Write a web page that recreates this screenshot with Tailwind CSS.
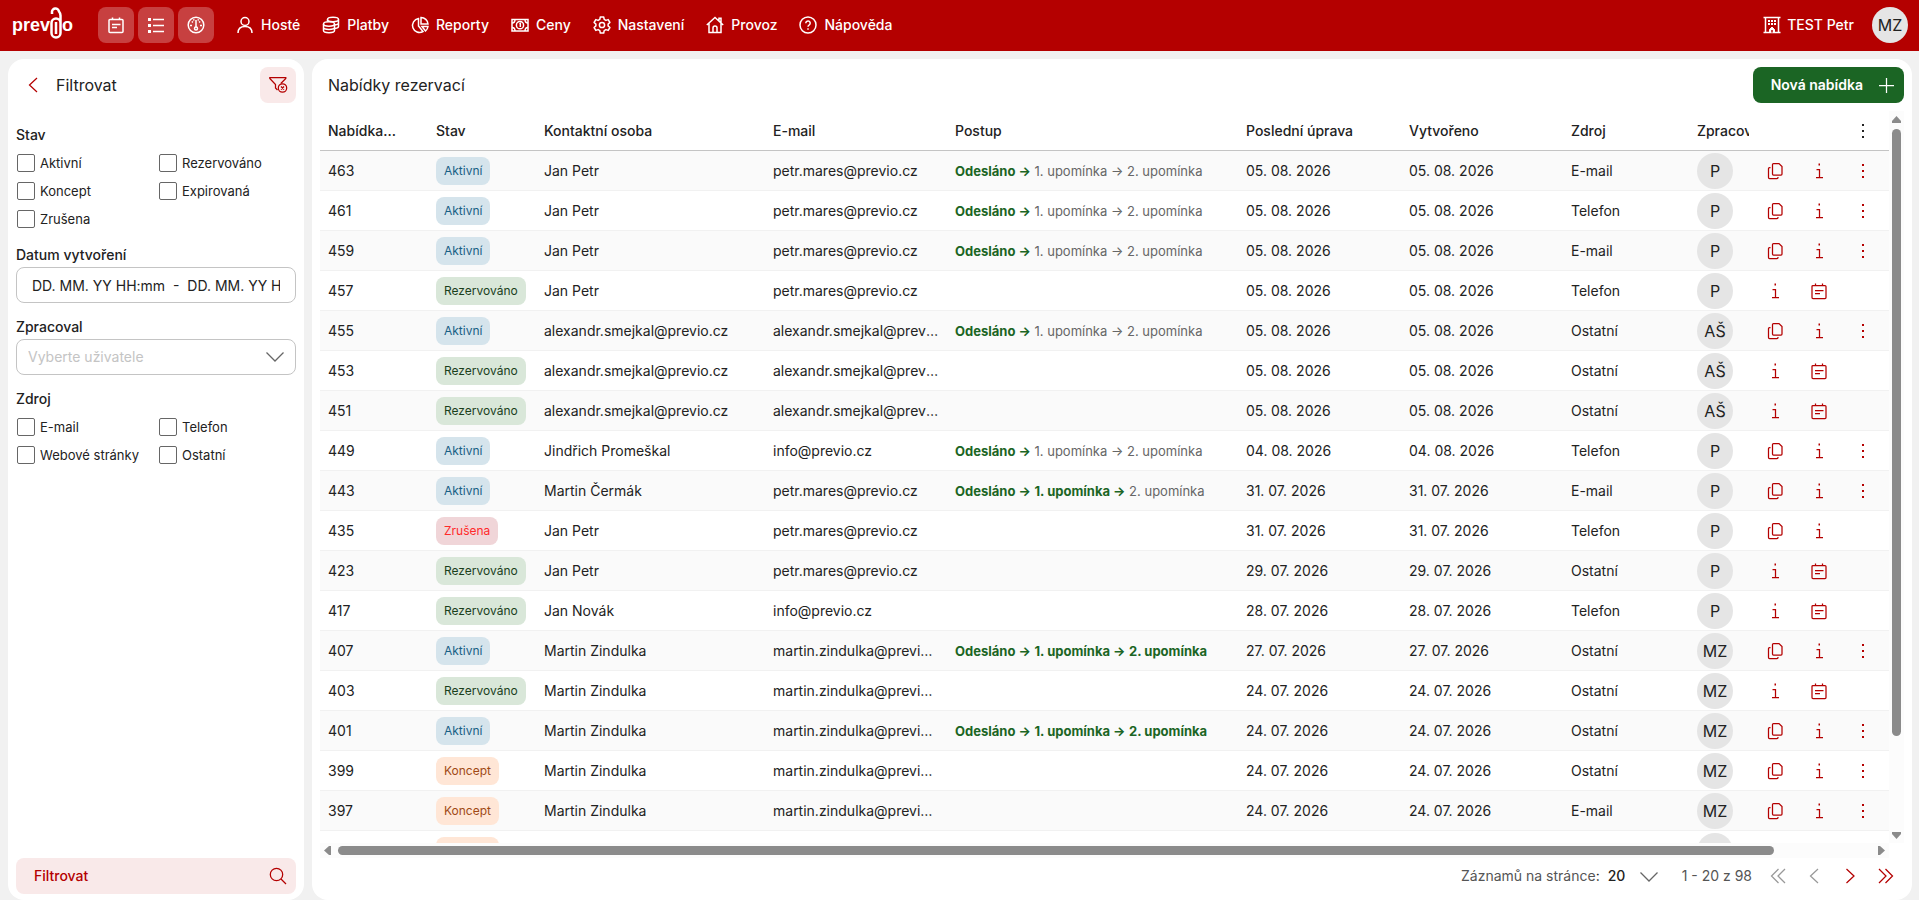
<!DOCTYPE html>
<html lang="cs">
<head>
  <meta charset="UTF-8" />
  <meta name="viewport" content="width=device-width, initial-scale=1" />
  <title>Nabídky rezervací | Previo</title>
  <script src="https://cdn.jsdelivr.net/npm/@tailwindcss/browser@4"></script>
</head>
<body class="flex h-screen flex-col overflow-hidden bg-[#f1f1f1] font-['Inter',sans-serif] text-sm text-[#222]">

  <!-- Ikony -->
  <svg class="hidden">
    <symbol id="i-calendar" viewBox="0 0 18 18"><path d="M3 3.500h12a1 1 0 0 1 1 1v11a1 1 0 0 1-1 1H3a1 1 0 0 1-1-1v-11a1 1 0 0 1 1-1zM5.500 1.500v2M12.500 1.500v2M5 8.500h8.500M5 11.500h5" /></symbol>
    <symbol id="i-list" viewBox="0 0 18 18"><path d="M6 3.500h11M6 9.500h11M6 15.500h11" /><path d="M1 3.500h3M1 9.500h3M1 15.500h3" stroke-width="3" /></symbol>
    <symbol id="i-gauge" viewBox="0 0 18 18"><circle cx="9" cy="9" r="7.800" /><path d="M9 4v7M3 9.500h2M13 9.500h2M4.800 5.500l1.200.8M13.200 5.500l-1.200.8M6.500 3.300l.5 1.200M11.500 3.300L11 4.500" /><circle cx="9" cy="12.500" r="1.500" /></symbol>
    <symbol id="i-user" viewBox="0 0 18 18"><circle cx="9" cy="5.500" r="4" /><path d="M2 17c0-4 2.500-6.500 7-6.500s7 2.500 7 6.500" /></symbol>
    <symbol id="i-coins" viewBox="0 0 18 18"><ellipse cx="7" cy="8" rx="5.500" ry="2.200" /><path d="M1.500 8v6.500c0 1.200 2.500 2.200 5.500 2.200s5.500-1 5.500-2.200V8M1.500 11.200c0 1.200 2.500 2.200 5.500 2.200s5.500-1 5.500-2.200M5.500 5.500V3.500M16.500 3.500v7c0 .9-1.500 1.600-3.500 1.900M16.500 7c0 .9-1.500 1.600-3.500 1.900" /><ellipse cx="11" cy="3.500" rx="5.500" ry="2.200" /></symbol>
    <symbol id="i-pie" viewBox="0 0 18 18"><path d="M7.500 2.500a7 7 0 1 0 4.500 13L7.500 10z" /><path d="M10 1.500v6.500h7A7 7 0 0 0 10 1.500zM11 10.500l3.500 4.500a7 7 0 0 0 2.500-4.500z" /></symbol>
    <symbol id="i-money" viewBox="0 0 18 18"><rect x="1" y="3.500" width="16" height="11.500" /><circle cx="9" cy="9.200" r="3.600" /><path d="M8.500 8l.8-.5v3.500M1 7c2 0 3-1.500 3-3.500M17 7c-2 0-3-1.500-3-3.500M1 11.500c2 0 3 1.500 3 3.500M17 11.500c-2 0-3 1.500-3 3.500" /></symbol>
    <symbol id="i-gear" viewBox="0 0 18 18"><circle cx="9" cy="9" r="2.600" /><path d="M7.300 1h3.400l.5 2.400 1.700 1 2.300-.8 1.700 2.900-1.800 1.600v1.800l1.800 1.600-1.700 2.900-2.300-.8-1.700 1-.5 2.400H7.300l-.5-2.400-1.700-1-2.300.8-1.700-2.900 1.800-1.600V8.100L1.100 6.500l1.700-2.900 2.300.8 1.700-1z" stroke-linejoin="round" /></symbol>
    <symbol id="i-home" viewBox="0 0 18 18"><path d="M.8 9L9 1.500 17.200 9M3 7.500v9h12v-9M13 5V2.200h2v4.500M7 16.500v-4.500a2 2 0 0 1 4 0v4.500" /></symbol>
    <symbol id="i-help" viewBox="0 0 18 18"><circle cx="9" cy="9" r="8" /><path d="M6.800 7.200a2.200 2.200 0 1 1 3.500 1.700c-.8.500-1.300.9-1.300 1.900M9 12.300v1.400" /></symbol>
    <symbol id="i-hotel" viewBox="0 0 18 18"><path d="M.5 1.500h17M.5 16.500h17M2.500 1.500v15M15.500 1.500v15" /><path d="M5 5h2M8 5h2M11 5h2M5 8h2M8 8h2M11 8h2" stroke-width="2" /><path d="M6.500 16v-2.500L9 11l2.500 2.500V16z" fill="currentColor" stroke-width="1" /><path d="M9 14v2.500" stroke="#b40000" /></symbol>
    <symbol id="i-filter" viewBox="0 0 20 20"><path d="M9.500 15L7.500 13V9.500L1.800 3.500V2.500h16V3.500l-5 5" /><circle cx="14.500" cy="13" r="4.200" /><path d="M13 11.500l3 3M16 11.500l-3 3" /></symbol>
    <symbol id="i-left" viewBox="0 0 18 18"><path d="M13 2L5.500 9l7.500 7" /></symbol>
    <symbol id="i-right" viewBox="0 0 18 18"><path d="M5.500 2L13 9l-7.500 7" /></symbol>
    <symbol id="i-first" viewBox="0 0 18 18"><path d="M9.500 2L2.500 9l7 7M16 2L9 9l7 7" /></symbol>
    <symbol id="i-last" viewBox="0 0 18 18"><path d="M2 2l7 7-7 7M8.500 2l7 7-7 7" /></symbol>
    <symbol id="i-down" viewBox="0 0 18 18"><path d="M.5 4.500L9 13l8.500-8.500" /></symbol>
    <symbol id="i-plus" viewBox="0 0 18 18"><path d="M1 9.500h15M8.500 2v15" /></symbol>
    <symbol id="i-search" viewBox="0 0 18 18"><circle cx="7.500" cy="7.500" r="6.200" /><path d="M12 12l5 5" /></symbol>
    <symbol id="i-copy" viewBox="0 0 18 18"><path d="M7.500 1.500h5.500l3 3v7.500a1 1 0 0 1-1 1H7.500a1 1 0 0 1-1-1V2.500a1 1 0 0 1 1-1zM4.500 5.500h-1a1 1 0 0 0-1 1v9a1 1 0 0 0 1 1H11a1 1 0 0 0 1-1v-.500" /></symbol>
    <symbol id="i-info" viewBox="0 0 18 18"><path d="M6.500 7.500H9.500V15.500M6 15.500h7" /><path d="M8.500 2.500h1.500" stroke-width="2" /></symbol>
    <symbol id="i-dots" viewBox="0 0 18 18"><path d="M8 3h2M8 9h2M8 15h2" stroke-width="2" /></symbol>
  </svg>

  <header class="flex h-[51px] shrink-0 items-center bg-[#b40000] pr-[11px] pb-px pl-3 font-medium text-white">
    <a href="#" aria-label="Previo" class="flex w-[62px] items-center font-['Liberation_Sans',sans-serif] text-lg leading-none font-bold">
      <span>prev</span>
      <svg class="mb-1 h-8 w-3 shrink-0 fill-none stroke-current stroke-[2.5]" viewBox="0 0 12 32"><path d="M2 7V5.500a3.500 3.500 0 0 1 7-1c.800 1 1.500 2 1.500 4V26a4.500 4.500 0 0 1-9 0V16a4.500 4.500 0 0 1 9 0M6 15v12" /></svg>
      <span>o</span>
    </a>
    <div class="ml-6 flex gap-1">
      <button aria-label="Kalendář" class="flex size-9 items-center justify-center rounded-lg bg-white/25"><svg class="size-[18px] fill-none stroke-current stroke-[1.5]"><use href="#i-calendar" /></svg></button>
      <button aria-label="Seznam" class="flex size-9 items-center justify-center rounded-lg bg-white/25"><svg class="size-[18px] fill-none stroke-current stroke-[1.5]"><use href="#i-list" /></svg></button>
      <button aria-label="Přehled" class="flex size-9 items-center justify-center rounded-lg bg-white/25"><svg class="size-[18px] fill-none stroke-current stroke-[1.5]"><use href="#i-gauge" /></svg></button>
    </div>
    <nav id="nav" class="ml-[22px] flex gap-[22px]"></nav>
    <a href="#" class="ml-auto flex items-center gap-[6px]"><svg class="size-[18px] fill-none stroke-current stroke-[1.5]"><use href="#i-hotel" /></svg>TEST Petr</a>
    <button class="ml-[18px] size-9 rounded-full bg-[#e5e5e5] text-base font-normal text-[#222]">MZ</button>
  </header>

  <main class="flex min-h-0 grow gap-2 pt-2 pr-[7px] pl-2">
    <!-- Filtr -->
    <form class="flex w-[296px] shrink-0 flex-col rounded-2xl bg-white px-2 pt-2 pb-[6px]">
      <div class="flex items-center text-base">
        <button type="button" aria-label="Zpět" class="ml-2 text-[#b40000]"><svg class="size-[18px] fill-none stroke-current stroke-[1.25]"><use href="#i-left" /></svg></button>
        <h2 class="ml-[14px]">Filtrovat</h2>
        <button type="button" aria-label="Zrušit filtr" class="ml-auto flex size-9 items-center justify-center rounded-lg bg-[#f9e9e9] text-[#b40000]"><svg class="size-5 fill-none stroke-current stroke-[1.25]"><use href="#i-filter" /></svg></button>
      </div>

      <fieldset class="mt-[22px]">
        <legend class="font-medium">Stav</legend>
        <div id="stav" class="mt-2 grid grid-cols-2 gap-x-1 gap-y-2 text-[13px]"></div>
      </fieldset>

      <label for="datum" class="mt-4 font-medium">Datum vytvoření</label>
      <input id="datum" value="DD. MM. YY HH:mm  -  DD. MM. YY HH:mm" class="mt-[2px] h-9 rounded-lg border border-[#c4c4c4] px-[15px] whitespace-pre" />

      <label for="zpracoval" class="mt-[14px] font-medium">Zpracoval</label>
      <div class="relative mt-[2px]">
        <select id="zpracoval" class="h-9 w-full appearance-none rounded-lg border border-[#c4c4c4] px-[11px] text-[#c4c4c4]"><option>Vyberte uživatele</option></select>
        <svg class="pointer-events-none absolute top-[9px] right-3 size-[18px] fill-none stroke-[#666] stroke-[1.25]"><use href="#i-down" /></svg>
      </div>

      <fieldset class="mt-[14px]">
        <legend class="font-medium">Zdroj</legend>
        <div id="zdroj" class="mt-2 grid grid-cols-2 gap-x-1 gap-y-2 text-[13px]"></div>
      </fieldset>

      <button type="button" class="mt-auto flex h-9 items-center justify-between rounded-lg bg-[#f9e9e9] pr-[9px] pl-[18px] font-medium text-[#b40000]">Filtrovat<svg class="size-[18px] fill-none stroke-current stroke-[1.25]"><use href="#i-search" /></svg></button>
    </form>

    <!-- Nabídky -->
    <section class="flex min-w-0 grow flex-col rounded-2xl bg-white px-2 pt-2 pb-[6px]">
      <div class="flex h-9 items-center justify-between pl-2">
        <h1 class="text-base">Nabídky rezervací</h1>
        <button class="flex h-9 items-center gap-[15px] rounded-lg bg-[#1b6524] pr-2 pl-[18px] font-semibold text-white">Nová nabídka<svg class="size-[18px] fill-none stroke-current stroke-[1.25]"><use href="#i-plus" /></svg></button>
      </div>

      <div class="mt-2 flex min-h-0 grow">
        <div class="min-w-0 grow overflow-hidden">
          <table class="w-full table-fixed border-separate border-spacing-0 text-left whitespace-nowrap">
            <colgroup>
              <col class="w-[108px]" /><col class="w-[108px]" /><col class="w-[229px]" /><col class="w-[182px]" /><col /><col class="w-[163px]" /><col class="w-[162px]" /><col class="w-[126px]" /><col class="w-[64px]" /><col class="w-[136px]" />
            </colgroup>
            <thead>
              <tr class="h-10 *:border-b *:border-[#c4c4c4]">
                <th class="pl-2 font-medium">Nabídka...</th>
                <th class="pl-2 font-medium">Stav</th>
                <th class="pl-2 font-medium">Kontaktní osoba</th>
                <th class="pl-2 font-medium">E-mail</th>
                <th class="pl-2 font-medium">Postup</th>
                <th class="pl-2 font-medium">Poslední úprava</th>
                <th class="pl-2 font-medium">Vytvořeno</th>
                <th class="pl-2 font-medium">Zdroj</th>
                <th class="pr-1 pl-2 font-medium"><div class="overflow-hidden">Zpracoval</div></th>
                <th><button aria-label="Sloupce" class="ml-[88px] flex w-11 justify-center"><svg class="size-[18px] fill-none stroke-current"><use href="#i-dots" /></svg></button></th>
              </tr>
            </thead>
            <tbody id="rows"></tbody>
          </table>
        </div>
        <div class="flex w-[15px] shrink-0 flex-col items-center bg-[#fcfcfc] pt-[5px] pb-1">
          <svg class="h-[7px] w-[9px] fill-[#8b8b8b]" viewBox="0 0 9 7"><path d="M4.500 0L9 5v2H0V5z" /></svg>
          <div class="mt-[6px] h-[607px] w-[9px] rounded-full bg-[#8b8b8b]"></div>
          <svg class="mt-auto h-[7px] w-[9px] fill-[#8b8b8b]" viewBox="0 0 9 7"><path d="M4.500 7L9 2V0H0v2z" /></svg>
        </div>
      </div>
      <div class="mr-[15px] flex h-[15px] shrink-0 items-center bg-[#fcfcfc] px-1">
        <svg class="h-[9px] w-[7px] fill-[#8b8b8b]" viewBox="0 0 7 9"><path d="M0 4.500L5 0h2v9H5z" /></svg>
        <div class="ml-[7px] h-[9px] w-[92%] rounded-full bg-[#8b8b8b]"></div>
        <svg class="ml-auto h-[9px] w-[7px] fill-[#8b8b8b]" viewBox="0 0 7 9"><path d="M7 4.500L2 0H0v9h2z" /></svg>
      </div>

      <div class="flex h-9 shrink-0 items-center justify-end text-[#555]">
        <label for="stranka">Záznamů na stránce<span class="text-[#222]">:</span></label>
        <div class="relative ml-2">
          <select id="stranka" class="w-[50px] appearance-none font-medium text-[#222]"><option>20</option></select>
          <svg class="pointer-events-none absolute top-[2px] right-0 size-[18px] fill-none stroke-[#666] stroke-[1.25]"><use href="#i-down" /></svg>
        </div>
        <span class="ml-6">1 - 20 z 98</span>
        <div class="ml-[17px] flex gap-[18px] pr-[9px]">
          <button aria-label="První" class="text-[#999]"><svg class="size-[18px] fill-none stroke-current stroke-[1.25]"><use href="#i-first" /></svg></button>
          <button aria-label="Předchozí" class="text-[#999]"><svg class="size-[18px] fill-none stroke-current stroke-[1.25]"><use href="#i-left" /></svg></button>
          <button aria-label="Další" class="text-[#b40000]"><svg class="size-[18px] fill-none stroke-current stroke-[1.25]"><use href="#i-right" /></svg></button>
          <button aria-label="Poslední" class="text-[#b40000]"><svg class="size-[18px] fill-none stroke-current stroke-[1.25]"><use href="#i-last" /></svg></button>
        </div>
      </div>
    </section>
  </main>

  <script>
    // Navigace
    const nav = [['user', 'Hosté'], ['coins', 'Platby'], ['pie', 'Reporty'], ['money', 'Ceny'], ['gear', 'Nastavení'], ['home', 'Provoz'], ['help', 'Nápověda']];
    document.getElementById('nav').innerHTML = nav.map(([i, t]) =>
      `<a href="#" class="flex items-center gap-[7px]"><svg class="size-[18px] fill-none stroke-current stroke-[1.5]"><use href="#i-${i}" /></svg>${t}</a>`).join('');

    // Zaškrtávátka
    const boxes = (id, items) => {
      document.getElementById(id).innerHTML = items.map(t =>
        `<label class="flex h-5 items-center gap-[5px] pl-px"><input type="checkbox" class="size-[18px] appearance-none rounded-xs border border-[#666]" />${t}</label>`).join('');
    };
    boxes('stav', ['Aktivní', 'Rezervováno', 'Koncept', 'Expirovaná', 'Zrušena']);
    boxes('zdroj', ['E-mail', 'Telefon', 'Webové stránky', 'Ostatní']);

    // Tabulka: číslo, stav, osoba, e-mail, hotové kroky, datum, zdroj, zpracoval
    const stavy = {
      A: ['Aktivní', 'bg-[#d5e4ec] text-[#185f85]'],
      R: ['Rezervováno', 'bg-[#d9e7d9] text-[#1a401c]'],
      Z: ['Zrušena', 'bg-[#f0d5d8] text-[#ff2a2a]'],
      K: ['Koncept', 'bg-[#ffe6d6] text-[#a04a15]'],
    };
    const data = [
      [463, 'A', 'Jan Petr', 'petr.mares@previo.cz', 1, '05. 08. 2026', 'E-mail', 'P'],
      [461, 'A', 'Jan Petr', 'petr.mares@previo.cz', 1, '05. 08. 2026', 'Telefon', 'P'],
      [459, 'A', 'Jan Petr', 'petr.mares@previo.cz', 1, '05. 08. 2026', 'E-mail', 'P'],
      [457, 'R', 'Jan Petr', 'petr.mares@previo.cz', 0, '05. 08. 2026', 'Telefon', 'P'],
      [455, 'A', 'alexandr.smejkal@previo.cz', 'alexandr.smejkal@previo.cz', 1, '05. 08. 2026', 'Ostatní', 'AŠ'],
      [453, 'R', 'alexandr.smejkal@previo.cz', 'alexandr.smejkal@previo.cz', 0, '05. 08. 2026', 'Ostatní', 'AŠ'],
      [451, 'R', 'alexandr.smejkal@previo.cz', 'alexandr.smejkal@previo.cz', 0, '05. 08. 2026', 'Ostatní', 'AŠ'],
      [449, 'A', 'Jindřich Promeškal', 'info@previo.cz', 1, '04. 08. 2026', 'Telefon', 'P'],
      [443, 'A', 'Martin Čermák', 'petr.mares@previo.cz', 2, '31. 07. 2026', 'E-mail', 'P'],
      [435, 'Z', 'Jan Petr', 'petr.mares@previo.cz', 0, '31. 07. 2026', 'Telefon', 'P'],
      [423, 'R', 'Jan Petr', 'petr.mares@previo.cz', 0, '29. 07. 2026', 'Ostatní', 'P'],
      [417, 'R', 'Jan Novák', 'info@previo.cz', 0, '28. 07. 2026', 'Telefon', 'P'],
      [407, 'A', 'Martin Zindulka', 'martin.zindulka@previo.cz', 3, '27. 07. 2026', 'Ostatní', 'MZ'],
      [403, 'R', 'Martin Zindulka', 'martin.zindulka@previo.cz', 0, '24. 07. 2026', 'Ostatní', 'MZ'],
      [401, 'A', 'Martin Zindulka', 'martin.zindulka@previo.cz', 3, '24. 07. 2026', 'Ostatní', 'MZ'],
      [399, 'K', 'Martin Zindulka', 'martin.zindulka@previo.cz', 0, '24. 07. 2026', 'Ostatní', 'MZ'],
      [397, 'K', 'Martin Zindulka', 'martin.zindulka@previo.cz', 0, '24. 07. 2026', 'E-mail', 'MZ'],
      [395, 'K', 'Martin Zindulka', 'martin.zindulka@previo.cz', 0, '24. 07. 2026', 'E-mail', 'MZ'],
    ];
    const akce = { A: ['copy', 'info', 'dots'], R: ['info', 'calendar'], Z: ['copy', 'info'], K: ['copy', 'info', 'dots'] };
    const popis = { copy: 'Kopírovat', info: 'Informace', dots: 'Další akce', calendar: 'Kalendář' };

    function postup(n) {
      if (!n) return '';
      const kroky = ['Odesláno →', '1. upomínka →', '2. upomínka'];
      return kroky.map((k, i) => `<span class="${i < n ? 'font-bold text-[#1b6524]' : 'text-[#666]'}">${k}</span>`).join(' ');
    }

    function tlacitko(a) {
      return `<button aria-label="${popis[a]}" class="flex w-11 justify-center"><svg class="size-[18px] fill-none stroke-current stroke-[1.25]"><use href="#i-${a}" /></svg></button>`;
    }

    document.getElementById('rows').innerHTML = data.map(([id, s, osoba, mail, n, datum, zdroj, kdo]) => `
      <tr class="h-10 odd:bg-[#fafafa] *:border-b *:border-[#f1f1f1] *:pt-px">
        <td class="pl-2">${id}</td>
        <td class="pl-2"><span class="flex h-7 w-fit items-center rounded-lg px-2 text-xs ${stavy[s][1]}">${stavy[s][0]}</span></td>
        <td class="pl-2">${osoba}</td>
        <td class="truncate px-2">${mail}</td>
        <td class="pl-2 text-[13px]">${postup(n)}</td>
        <td class="pl-2">${datum}</td>
        <td class="pl-2">${datum}</td>
        <td class="pl-2">${zdroj}</td>
        <td class="pl-2"><div class="flex size-9 items-center justify-center rounded-full bg-[#e5e5e5] text-base">${kdo}</div></td>
        <td><div class="flex text-[#b40000]">${akce[s].map(tlacitko).join('')}</div></td>
      </tr>`).join('');
  </script>
</body>
</html>
